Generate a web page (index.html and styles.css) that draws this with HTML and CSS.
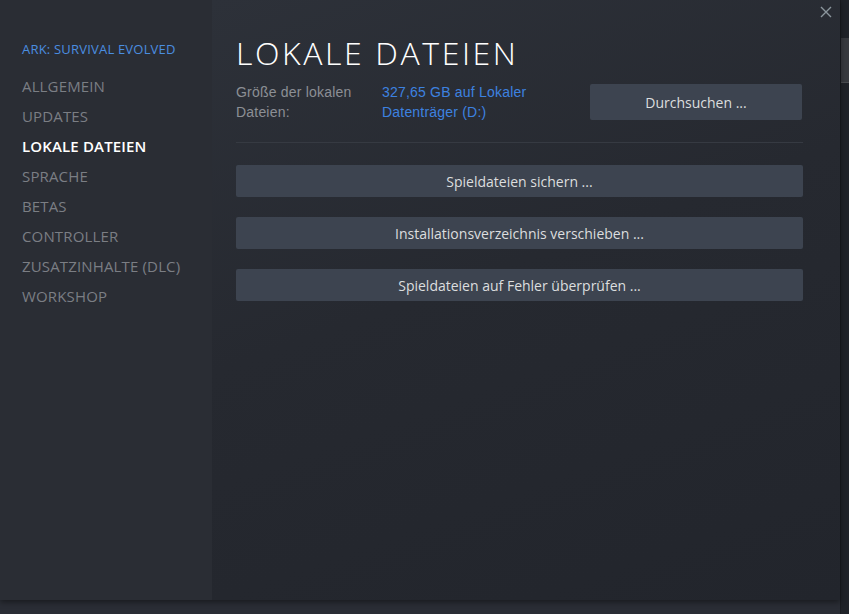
FILE: index.html
```html
<!DOCTYPE html>
<html lang="de">
<head>
    <meta charset="UTF-8">
    <title>Eigenschaften - ARK: Survival Evolved</title>
    <link rel="stylesheet" href="styles.css">
</head>
<body>
    <div class="window">
        <div class="dialog">
            <nav class="sidebar">
                <div class="game-title">ARK: SURVIVAL EVOLVED</div>
                <a class="nav-item">ALLGEMEIN</a>
                <a class="nav-item">UPDATES</a>
                <a class="nav-item active">LOKALE DATEIEN</a>
                <a class="nav-item">SPRACHE</a>
                <a class="nav-item">BETAS</a>
                <a class="nav-item">CONTROLLER</a>
                <a class="nav-item">ZUSATZINHALTE (DLC)</a>
                <a class="nav-item">WORKSHOP</a>
            </nav>

            <main class="content">
                <button class="close-btn" title="Schließen">
                    <svg width="12" height="12" viewBox="0 0 12 12">
                        <path d="M1 1 L11 11 M11 1 L1 11" stroke="#8b959d" stroke-width="1.4" fill="none"/>
                    </svg>
                </button>

                <h1>LOKALE DATEIEN</h1>

                <div class="size-row">
                    <div class="size-label">Größe der lokalen Dateien:</div>
                    <div class="size-value">327,65 GB auf Lokaler Datenträger (D:)</div>
                    <button class="steam-btn browse-btn">Durchsuchen ...</button>
                </div>

                <div class="divider"></div>

                <div class="actions">
                    <button class="steam-btn">Spieldateien sichern ...</button>
                    <button class="steam-btn">Installationsverzeichnis verschieben ...</button>
                    <button class="steam-btn">Spieldateien auf Fehler überprüfen ...</button>
                </div>
            </main>
        </div>
        <div class="bottom-strip"></div>
    </div>

    <div class="scroll-track">
        <div class="scroll-thumb"></div>
    </div>
</body>
</html>
```

FILE: styles.css
```css
html, body {
    margin: 0;
    height: 100%;
}

body {
    background: #2a2d35;
    font-family: 'Open Sans', 'Liberation Sans', sans-serif;
    display: flex;
    overflow: hidden;
}

.window {
    width: 840px;
    display: flex;
    flex-direction: column;
}

.dialog {
    height: 600px;
    display: flex;
    box-shadow: 0 2px 6px rgba(0, 0, 0, 0.45);
    position: relative;
    z-index: 1;
}

.bottom-strip {
    flex: 1;
    background: #2a2d35;
}

/* linke Navigation */
.sidebar {
    width: 212px;
    background: #2a2d34;
    padding-top: 39px;
    box-sizing: border-box;
    display: flex;
    flex-direction: column;
}

.game-title {
    color: #4a8ee0;
    font-size: 13px;
    letter-spacing: 0.2px;
    padding-left: 22px;
    height: 20px;
    line-height: 20px;
    margin-bottom: 16px;
}

.nav-item {
    display: block;
    color: #7b7e84;
    font-size: 15px;
    letter-spacing: 0.15px;
    padding-left: 22px;
    height: 30px;
    line-height: 22px;
    cursor: pointer;
}

.nav-item.active {
    color: #ffffff;
    font-weight: 600;
}

/* rechter Bereich */
.content {
    flex: 1;
    position: relative;
    background: linear-gradient(160deg, #2d3139 0%, #262930 45%, #22252c 100%);
    padding: 34px 37px 0 24px;
}

.close-btn {
    position: absolute;
    top: 6px;
    right: 8px;
    background: none;
    border: none;
    padding: 0;
    width: 12px;
    height: 12px;
    cursor: pointer;
}

.content h1 {
    margin: 0;
    color: #ffffff;
    font-weight: 300;
    font-size: 32px;
    letter-spacing: 2.6px;
    line-height: 38px;
}

.size-row {
    display: flex;
    align-items: flex-start;
    margin-top: 10px;
    font-size: 14px;
    line-height: 20px;
    letter-spacing: 0.2px;
    font-family: 'Liberation Sans', sans-serif;
}

.size-label {
    width: 146px;
    color: #8c8f95;
}

.size-value {
    width: 208px;
    color: #3d82e0;
}

.steam-btn {
    background: #3d4450;
    border: none;
    border-radius: 2px;
    color: #dcdedf;
    font-family: 'Open Sans', 'Liberation Sans', sans-serif;
    font-size: 14px;
    cursor: pointer;
    height: 32px;
}

.steam-btn:hover {
    background: #464d5a;
}

.browse-btn {
    width: 212px;
    height: 36px;
    margin-top: 2px;
}

.divider {
    height: 1px;
    background: #363a42;
    margin-top: 20px;
}

.actions {
    display: flex;
    flex-direction: column;
    gap: 20px;
    margin-top: 22px;
}

.actions .steam-btn {
    width: 100%;
}

/* schmale Leiste am Fensterrand */
.scroll-track {
    flex: 1;
    background: #1f2228;
    border-left: 1px solid #1a1c21;
}

.scroll-thumb {
    margin-top: 38px;
    height: 44px;
    background: #37393e;
    border-bottom: 1px solid #4a4c50;
}
```
